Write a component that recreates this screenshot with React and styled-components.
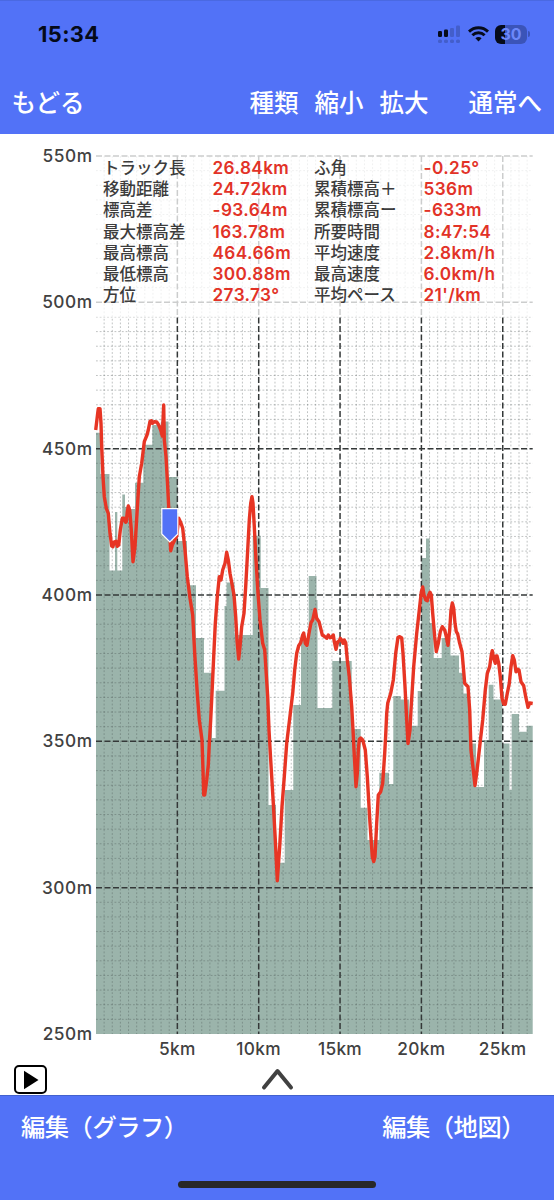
import React from "react";
import styled, { createGlobalStyle } from "styled-components";

const Global = createGlobalStyle`
  * { box-sizing: border-box; }
  body { margin: 0; background: #fff; }
`;

const sans = `Inter, "Noto Sans CJK JP", sans-serif`;
const BLUE = "#5272f7";

const Screen = styled.div`
  width: 554px;
  height: 1200px;
  display: flex;
  flex-direction: column;
  overflow: hidden;
  font-family: ${sans};
  background: #fff;
`;

const Header = styled.header`
  height: 134px;
  background: ${BLUE};
  border-top: 1px solid #4a69e2;
  flex: none;
`;

const StatusBar = styled.div`
  height: 66px;
  padding: 0 24px 0 38px;
  display: flex;
  align-items: center;
  justify-content: space-between;
`;

const Clock = styled.span`
  font-size: 21.8px;
  font-weight: 700;
  line-height: 24px;
  color: #050a18;
  letter-spacing: 0.4px;
`;

const NavBar = styled.nav`
  height: 67px;
  padding: 4px 12px 0 11.5px;
  display: flex;
  align-items: center;
`;

const BarButton = styled.button`
  border: 0;
  padding: 0;
  margin: 0 0 0 ${(p) => p.$gap || "0"};
  background: none;
  font-family: ${sans};
  font-size: 24.5px;
  font-weight: 500;
  line-height: 36px;
  color: #fff;
  white-space: nowrap;
`;

const Main = styled.main`
  position: relative;
  height: 961px;
  flex: none;
  padding-top: 12px;
`;

const ChartRow = styled.div`
  display: flex;
  height: 898px;
`;

const YAxis = styled.div`
  width: 96px;
  padding-right: 3.5px;
  display: flex;
  flex-direction: column;
  justify-content: space-between;
  align-items: flex-end;
`;

const AxisLabel = styled.span`
  font-size: 17.3px;
  line-height: 20px;
  font-weight: 500;
  letter-spacing: ${(p) => (p.$wide ? "0.5px" : "0.3px")};
  color: #414141;
`;

const Plot = styled.svg`
  display: block;
  margin-top: 10px;
  overflow: visible;
`;

const XAxis = styled.div`
  margin: -5px 0 0 136.6px;
  display: grid;
  grid-template-columns: repeat(5, 81.35px);
  justify-items: center;
`;

const Stats = styled.div`
  position: absolute;
  top: 16px;
  left: 96px;
  width: 457px;
  height: 167px;
  padding: 8px 0 0 7px;
  background: rgba(255, 255, 255, 0.75);
  display: grid;
  grid-template-columns: 109.5px 101.5px 109.5px 1fr;
  grid-auto-rows: 21.2px;
  align-content: start;
`;

const StatName = styled.span`
  font-size: 16.5px;
  line-height: 21px;
  font-weight: 500;
  color: #3c3c3c;
  white-space: nowrap;
`;

const StatValue = styled(StatName)`
  font-size: 17.2px;
  line-height: 19px;
  font-weight: 600;
  letter-spacing: 0.4px;
  color: #e23227;
`;

const Controls = styled.div`
  display: flex;
  align-items: flex-start;
  padding: 6px 0 0 14px;
`;

const PlayButton = styled.button`
  border: 2px solid #000;
  border-radius: 5px;
  background: #fff;
  width: 33px;
  height: 29px;
  padding: 0 0 0 1px;
  margin-right: 214px;
  display: flex;
  align-items: center;
  justify-content: center;
`;

const Chevron = styled.svg`
  margin-top: 3px;
`;

const Footer = styled.footer`
  flex: 1;
  background: ${BLUE};
  border-top: 1px solid #4261ce;
  display: flex;
  flex-direction: column;
  justify-content: space-between;
  align-items: center;
  padding: 13px 0 12px;
`;

const FooterRow = styled.div`
  width: 100%;
  padding: 0 29px 0 21px;
  display: flex;
  justify-content: space-between;
`;

const FooterButton = styled(BarButton)`
  font-size: 24.3px;
  letter-spacing: -0.5px;
`;

const HomeIndicator = styled.div`
  width: 198px;
  height: 7px;
  border-radius: 4px;
  background: #282828;
`;

const SignalIcon = styled.svg`
  margin-right: 7px;
`;
const WifiIcon = styled.svg`
  margin-right: 6px;
`;
const StatusIcons = styled.div`
  display: flex;
  align-items: center;
`;
const Battery = styled.div`
  width: 32px;
  height: 19px;
  border-radius: 6px;
  background: linear-gradient(90deg, #060b1b 0 30%, #3b54b8 30%);
  color: #6d88fa;
  font-size: 16px;
  font-weight: 700;
  line-height: 19px;
  text-align: center;
`;
const BatteryTip = styled.div`
  width: 2px;
  height: 6px;
  margin-left: 1px;
  border-radius: 0 2px 2px 0;
  background: #3b54b8;
`;

/* terrain profile: [start x, top y] of each step */
const steps = [
  [96, 432.7], [100.5, 474], [109.5, 570.5], [115, 512], [117.3, 570.5],
  [122.3, 494.5], [125, 507], [129, 509], [135, 482.7], [143.3, 444.7],
  [152.3, 425], [161, 421.5], [168.5, 477], [177.5, 541], [187, 585.3],
  [196, 638], [204, 672.7], [212, 738], [215.7, 690.7], [224.5, 606],
  [226.5, 582.5], [234.5, 635], [252.7, 535.7], [260.7, 588], [268.5, 805],
  [276, 862.7], [284.7, 790], [293.3, 705], [301, 638], [308.7, 576],
  [316.5, 600], [317.5, 708], [332.3, 661], [351.7, 729], [360.7, 807.7],
  [367.5, 840], [379.3, 772.7], [389, 784], [393.3, 696], [400.7, 699.5],
  [409, 725.7], [417.7, 691], [421.5, 558], [426, 538.5], [429.7, 623],
  [433.7, 658], [441.7, 638], [450.5, 655.5], [459, 672.7], [463.5, 693.5],
  [469, 743.5], [476, 787], [484, 740], [488.7, 684.7], [493.5, 699.5],
  [502.3, 743.5], [509.5, 790], [511.7, 714], [519, 731.7], [526.7, 725.7],
];

/* recorded GPS track */
const track = `95.7,430 97.7,413.3 98.3,408.7 100,408.7 101,423.3 101.7,446.7 103,476.7
104.3,496.7 106.3,508.3 108.3,513.3 110,533.3 111.7,546 113,546.7 114,542 116,541.3
117.3,546.3 118.7,545 120.3,530 122.3,518.3 124,518.3 125.7,522.3 126.3,521.7
127.3,511.7 128.3,506 129.7,510 131.3,530 133,561.7 135,546.7 137,513.3 139.3,476.7
141.7,463.3 144.3,441.7 147,435 148.3,430 150,421.3 151.3,420.7 152.3,423.3
154.3,421.7 156.7,422 158.7,425 160.7,430 162.3,436 163.7,405 164.3,440 166,456.7
167.7,486.7 169,513.3 170,536.7 170.7,550.7 172.3,545 176.7,536 178.7,518.3
181,523.3 182.7,528.3 185,550 187.3,576.7 190,598.3 192.7,615 194.7,653.3
197.3,693.3 199.3,720 202,740 203,770 203.7,795 204.7,795 206.7,780 208.3,765
209.3,743.3 210.7,720 212.3,686.7 213.7,656.7 215.3,623.3 217.3,596.7 219.3,576.7
221,580 222.7,570 225,563.3 226.7,552.3 228.3,560 230,573.3 234,595 235.7,616.7
237,640 238.7,659 240,646.7 241.7,626.7 244,613.3 245.7,586.7 247.7,550 249.3,520
250.7,503.3 252,496.7 253,503.3 254.3,526.7 256,560 258,593.3 260,620 262.7,643.3
264.7,650 266,670 267.7,696.7 269,730 270.7,760 273.3,803.3 275.3,840 277.3,880.7
279.7,846.7 282,806.7 284.3,776.7 286.7,743.3 290,716 292.7,693.3 294.7,670
296.7,653.3 298.7,645.7 300.7,642.7 302.7,635 303.7,633 305.3,643.3 307,645.3
309,633.3 311,622.7 312.7,620 315,609.5 316.7,618.3 319,621.7 320.7,628.3
322.3,635 324.3,636.3 326.7,638.3 328.3,635 330,637.7 331.7,637.3 333.3,635
334.3,641.7 336,649.3 337.7,641.7 339.3,641 340.3,638.3 341.7,640 343,643.3
344.3,640 345.7,642.7 347.3,660 349.3,676.7 351.7,706.7 353,730 354,750
355.3,773.3 356,786.7 357.3,773.3 358.3,750 359.3,739.3 360.7,738 362.7,740
365.3,750 367.3,776.7 370,823.3 372.3,856.7 373.7,861.5 375,856.7 376.7,823.3
378.3,795 380.7,791.7 382.7,783.3 384.7,753.3 385.7,735 386.7,713.3 387.7,703.3
390.7,693.3 393.3,680 395.7,653.3 398,637.3 399.7,636.7 401.7,638 403,653.3
405,686.7 406.7,720 408,743.5 410,730 411,710 413.7,666.7 416.7,633.3 419.3,610
421.3,592 422.7,587 424,595 425.7,600 427.3,600.7 428.7,595 430,592.3 431.3,595
432.7,613.3 434.7,636.7 436.3,651.5 438.3,643.3 440.3,631.7 442.3,626.7 444.7,630
446.3,636.7 448,645.3 449.7,630 451,610 452.3,603 453.7,608.3 455,623.3
456.3,631.7 457.7,634 459.3,641.7 462,651.7 463.3,666.7 464.7,683.3 466.3,685
468,686.7 469.7,710 471,750 473.3,770 475,785.5 476.7,773.3 479.3,750 482.7,720
485.3,690 487.3,673.3 489.7,666.7 491.3,655 492.3,650.7 493.3,656.7 495.3,663.3
496,656 497,656 498.7,663.3 500.3,676.7 502,698.3 503.7,704 505.3,704.3 507.3,693.3
509.3,683.3 511,666.7 512.7,655.7 514.3,660 516,671.7 517.7,669.3 519,670
521,681.7 523.7,685.7 525.7,696.7 528,707.3 529.7,703 532.7,703.5`;

const LEFT = 96;
const RIGHT = 532.7;
const TOP = 156;
const BOTTOM = 1034;
const STEP_X = 8.135;
const STEP_Y = 14.633;

const area =
  steps
    .map(([x, y], i) => `${i ? "H" : "M"}${x}${i ? "" : ` ${BOTTOM}`}V${y}`)
    .join("") + `H${RIGHT}V${BOTTOM}Z`;

const columns = Array.from({ length: 54 }, (_, i) => i);
const rows = Array.from({ length: 61 }, (_, i) => i);

function ElevationPlot() {
  return (
    <Plot width="437" height="878" viewBox="96 156 437 878">
      <path d={area} fill="#9bb4ab" />
      <g stroke="#404848" strokeOpacity="0.33" strokeWidth="1" strokeDasharray="1.8 1.9">
        {columns.filter((i) => i % 10).map((i) => (
          <line key={i} x1={LEFT + i * STEP_X} x2={LEFT + i * STEP_X} y1={TOP} y2={BOTTOM} />
        ))}
        {rows.filter((i) => i % 10).map((i) => (
          <line key={i} x1={LEFT} x2={RIGHT} y1={TOP + i * STEP_Y} y2={TOP + i * STEP_Y} />
        ))}
      </g>
      <g stroke="#343838" strokeWidth="1.5" strokeDasharray="6 2.5">
        {[1, 2, 3, 4, 5].map((i) => (
          <line key={i} x1={LEFT + i * 81.35} x2={LEFT + i * 81.35} y1={TOP} y2={BOTTOM} />
        ))}
        {[0, 1, 2, 3, 4, 5].map((i) => (
          <line key={i} x1={LEFT} x2={RIGHT} y1={TOP + i * 146.33} y2={TOP + i * 146.33} />
        ))}
      </g>
      <polyline points={track} fill="none" stroke="#e73524" strokeWidth="3.4" strokeLinejoin="round" />
      <path d="M161.8 508.6H177.8V534L169.8 542L161.8 534Z" fill={BLUE} stroke="#fff" strokeWidth="1.2" />
    </Plot>
  );
}

const stats = [
  ["トラック長", "26.84km", "ふ角", "-0.25°"],
  ["移動距離", "24.72km", "累積標高＋", "536m"],
  ["標高差", "-93.64m", "累積標高ー", "-633m"],
  ["最大標高差", "163.78m", "所要時間", "8:47:54"],
  ["最高標高", "464.66m", "平均速度", "2.8km/h"],
  ["最低標高", "300.88m", "最高速度", "6.0km/h"],
  ["方位", "273.73°", "平均ペース", "21'/km"],
];

export default function App() {
  return (
    <Screen>
      <Global />
      <Header>
        <StatusBar>
          <Clock>15:34</Clock>
          <StatusIcons>
            <SignalIcon width="23" height="19" viewBox="0 0 23 19">
              <rect x="0" y="6" width="4" height="6" rx="1.3" fill="#060b1b" />
              <rect x="6" y="4.5" width="4" height="7.5" rx="1.3" fill="#060b1b" />
              <rect x="12" y="3" width="4" height="9" rx="1.3" fill="#435ecb" />
              <rect x="18" y="0.5" width="4" height="11.5" rx="1.3" fill="#435ecb" />
              {[0, 6, 12, 18].map((x) => (
                <rect key={x} x={x} y="14.5" width="4" height="3.6" rx="1.5" fill="#435ecb" />
              ))}
            </SignalIcon>
            <WifiIcon width="21" height="16" viewBox="0 0 21 16" fill="none" stroke="#060b1b" strokeWidth="2.9">
              <path d="M1 5.6C6.3 .5 14.7 .5 20 5.6" />
              <path d="M4.4 9.2C7.8 5.9 13.2 5.9 16.6 9.2" />
              <path d="M7.4 12.3C9.2 10.6 11.8 10.6 13.6 12.3L10.5 15.6Z" fill="#060b1b" stroke="none" />
            </WifiIcon>
            <Battery>30</Battery>
            <BatteryTip />
          </StatusIcons>
        </StatusBar>
        <NavBar>
          <BarButton>もどる</BarButton>
          <BarButton $gap="auto">種類</BarButton>
          <BarButton $gap="16px">縮小</BarButton>
          <BarButton $gap="16px">拡大</BarButton>
          <BarButton $gap="40px">通常へ</BarButton>
        </NavBar>
      </Header>
      <Main>
        <ChartRow>
          <YAxis>
            {[550, 500, 450, 400, 350, 300, 250].map((m) => (
              <AxisLabel $wide key={m}>{m}m</AxisLabel>
            ))}
          </YAxis>
          <ElevationPlot />
        </ChartRow>
        <XAxis>
          {[5, 10, 15, 20, 25].map((km) => (
            <AxisLabel key={km}>{km}km</AxisLabel>
          ))}
        </XAxis>
        <Controls>
          <PlayButton aria-label="再生">
            <svg width="16" height="20" viewBox="0 0 16 20">
              <path d="M1 .7V19.3L15.5 10Z" />
            </svg>
          </PlayButton>
          <Chevron width="33" height="23" viewBox="0 0 33 23" fill="none" stroke="#414141" strokeWidth="4" strokeLinecap="round" strokeLinejoin="round">
            <path d="M3 19.5L16.5 3L30 19.5" />
          </Chevron>
        </Controls>
        <Stats>
          {stats.map(([a, b, c, d]) => (
            <React.Fragment key={a}>
              <StatName>{a}</StatName>
              <StatValue>{b}</StatValue>
              <StatName>{c}</StatName>
              <StatValue>{d}</StatValue>
            </React.Fragment>
          ))}
        </Stats>
      </Main>
      <Footer>
        <FooterRow>
          <FooterButton>編集（グラフ）</FooterButton>
          <FooterButton>編集（地図）</FooterButton>
        </FooterRow>
        <HomeIndicator />
      </Footer>
    </Screen>
  );
}
